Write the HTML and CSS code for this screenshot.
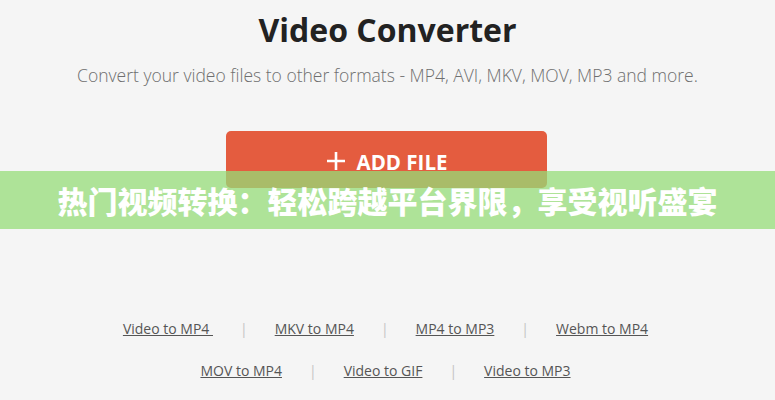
FILE: index.html
```html
<!DOCTYPE html>
<html lang="zh">
<head>
<meta charset="utf-8">
<link rel="stylesheet" href="styles.css">
</head>
<body>
<div class="page">
  <h1 class="title">Video Converter</h1>
  <p class="subtitle">Convert your video files to other formats - MP4, AVI, MKV, MOV, MP3 and more.</p>
  <div class="btn-wrap">
    <button class="add-btn"><svg class="plus" width="20" height="20" viewBox="0 0 20 20"><path d="M10 1v18M1 10h18" stroke="#fff" stroke-width="2.6" fill="none"/></svg><span>ADD FILE</span></button>
    <div class="banner">热门视频转换：轻松跨越平台界限，享受视听盛宴</div>
  </div>
  <div class="links">
    <div class="row">
      <a href="#">Video to MP4 </a><span class="sep">|</span>
      <a href="#">MKV to MP4</a><span class="sep">|</span>
      <a href="#">MP4 to MP3</a><span class="sep">|</span>
      <a href="#">Webm to MP4</a>
    </div>
    <div class="row">
      <a href="#">MOV to MP4</a><span class="sep">|</span>
      <a href="#">Video to GIF</a><span class="sep">|</span>
      <a href="#">Video to MP3</a>
    </div>
  </div>
</div>
</body>
</html>
```
FILE: styles.css
```css
html, body {
  margin: 0;
  padding: 0;
  background: #f5f5f5;
  font-family: "Open Sans", "Noto Sans CJK SC", sans-serif;
}
.page {
  width: 775px;
  height: 400px;
  overflow: hidden;
  display: flex;
  flex-direction: column;
  align-items: center;
}
.title {
  margin: 8px 0 0;
  font-size: 32px;
  font-weight: 700;
  color: #222;
  line-height: 44px;
}
.subtitle {
  margin: 12px 0 0;
  font-size: 17.5px;
  font-weight: 300;
  color: #6f6f6f;
  line-height: 22px;
}
.btn-wrap {
  position: relative;
  width: 775px;
  display: flex;
  justify-content: center;
  margin-top: 45px;
  height: 98px;
}
.add-btn {
  width: 321px;
  height: 57px;
  margin-left: -2px;
  border: none;
  border-radius: 5px;
  background: #e45c3f;
  color: #fff;
  font-family: "Open Sans", sans-serif;
  font-weight: 700;
  font-size: 20.5px;
  display: flex;
  align-items: flex-start;
  justify-content: center;
  gap: 11px;
  padding-top: 17px;
}
.plus { margin-top: 3px; }
.banner {
  position: absolute;
  left: 0;
  top: 40px;
  width: 775px;
  height: 58px;
  background: rgba(150, 220, 120, 0.75);
  color: #fff;
  font-family: "Noto Sans CJK SC", sans-serif;
  font-weight: 900;
  font-size: 30px;
  line-height: 58px;
  text-align: center;
}
.links {
  margin-top: 89px;
  padding-right: 4px;
  display: flex;
  flex-direction: column;
  align-items: center;
  gap: 20px;
}
.row {
  display: flex;
  align-items: center;
  font-size: 14px;
  line-height: 22px;
}
.row a {
  color: #555;
  text-decoration: underline;
  white-space: pre;
}
.sep {
  color: #c4c4c4;
  margin: 0 27px;
}
```
